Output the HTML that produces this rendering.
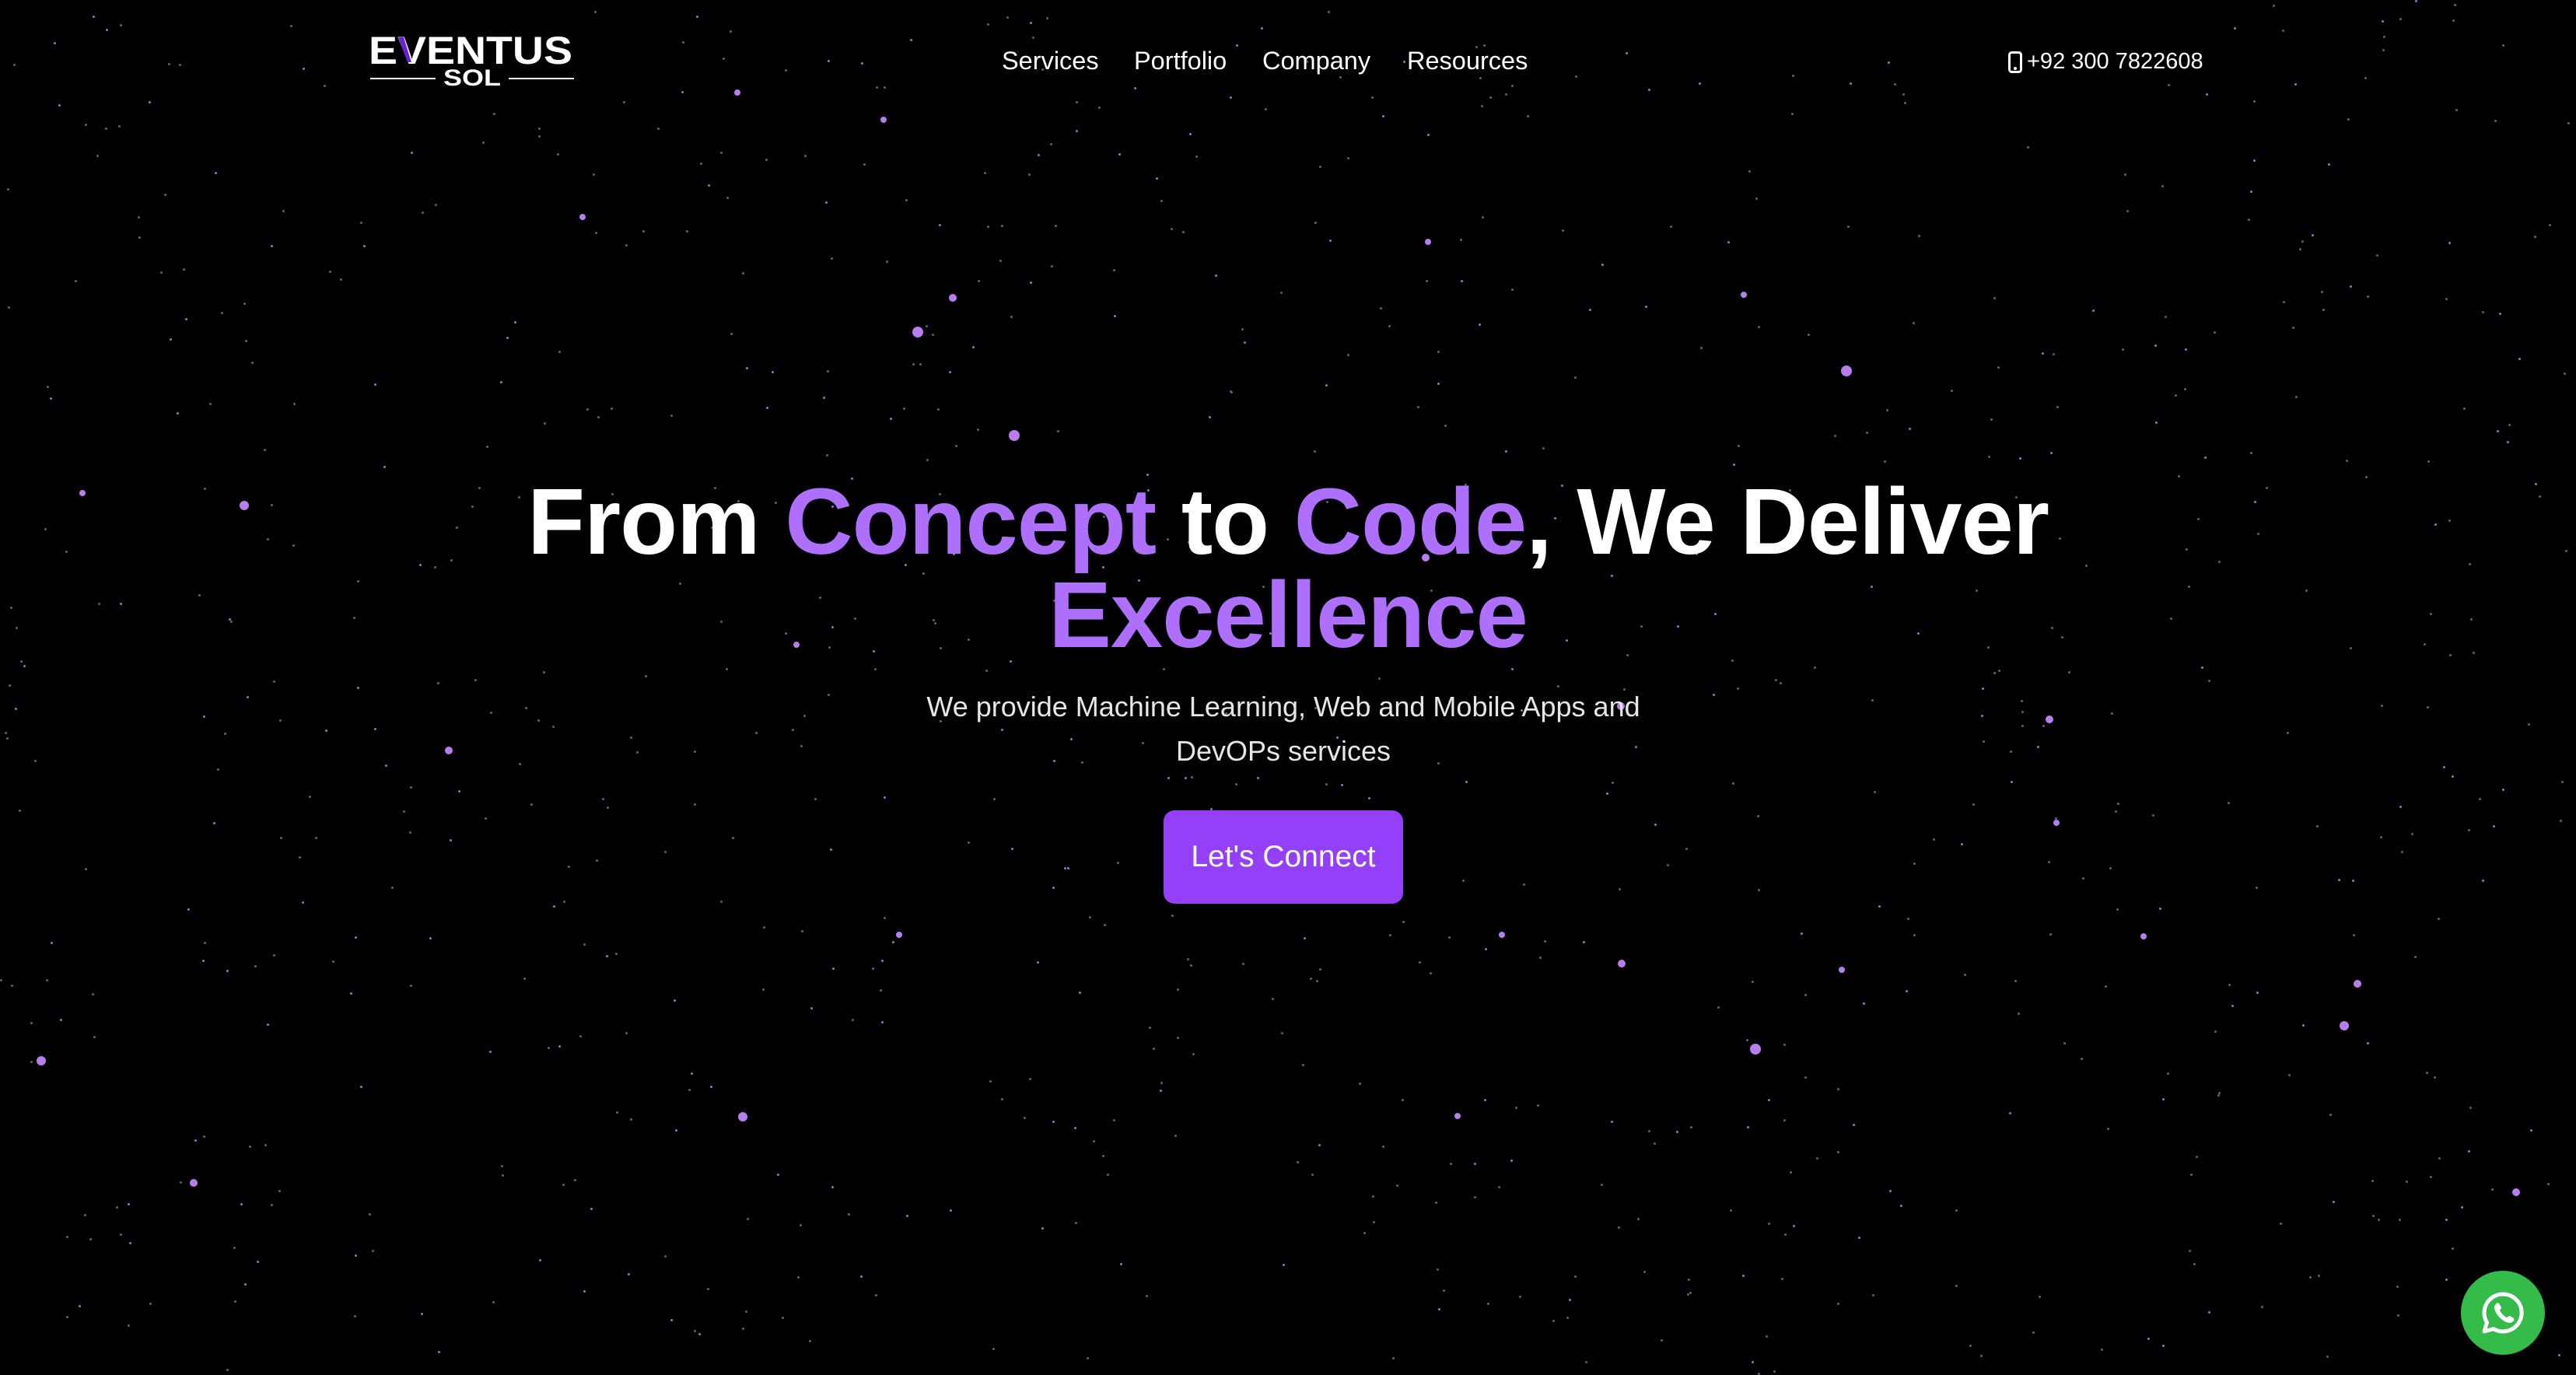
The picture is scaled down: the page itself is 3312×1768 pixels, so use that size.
<!DOCTYPE html>
<html><head><meta charset="utf-8">
<style>
html,body{margin:0;padding:0;background:#000;width:3312px;height:1766px;overflow:hidden;font-family:"Liberation Sans",Arial,sans-serif;color:#fff}
.s{position:absolute;border-radius:50%;background:#b77ef0}
.t{position:absolute;border-radius:50%;background:#6a5a80;width:3px;height:3px}
nav a{position:absolute;top:60px;font-size:32.5px;color:#fff;text-decoration:none}
h1{position:absolute;left:0;width:3312px;top:610px;margin:0;text-align:center;font-size:121px;line-height:120px;font-weight:bold;letter-spacing:-1px}
h1 span{color:#ad6ffc}
.sub{position:absolute;left:1150px;width:1000px;top:880px;text-align:center;font-size:36px;line-height:57px;color:#e6e6e6}
.btn{position:absolute;left:1496px;top:1042px;width:308px;height:120px;background:#9440f9;border-radius:14px;font-size:39px;line-height:120px;text-align:center;color:#fff}
.wa{position:absolute;left:3164px;top:1634px;width:108px;height:108px;border-radius:50%;background:#34bb4a}
</style></head><body>
<div id="stars"></div>
<svg style="position:absolute;left:474px;top:40px" width="266" height="72" viewBox="0 0 266 72">
<g fill="#fff" font-family="Liberation Sans,sans-serif" font-weight="bold">
<text x="0" y="42" font-size="50" textLength="262" lengthAdjust="spacingAndGlyphs">EVENTUS</text>
<text x="96" y="70" font-size="30" textLength="74" lengthAdjust="spacingAndGlyphs">SOL</text>
</g>
<polygon points="38,8 45,8 55,40 50,40" fill="#6b1fd6"/>
<rect x="2" y="60" width="84" height="2" fill="#fff"/><rect x="180" y="60" width="84" height="2" fill="#fff"/>
</svg>
<nav><a style="left:1288px">Services</a><a style="left:1458px">Portfolio</a><a style="left:1623px">Company</a><a style="left:1809px">Resources</a></nav>
<svg style="position:absolute;left:2582px;top:66px" width="18" height="28" viewBox="0 0 18 28"><rect x="1.5" y="1.5" width="15" height="25" rx="3" fill="none" stroke="#fff" stroke-width="3"/><circle cx="9" cy="22" r="2" fill="#fff"/></svg>
<div style="position:absolute;left:2606px;top:63px;font-size:29px">+92 300 7822608</div>
<h1>From <span>Concept</span> to <span>Code</span>, We Deliver<br><span>Excellence</span></h1>
<div class="sub">We provide Machine Learning, Web and Mobile Apps and DevOPs services</div>
<div class="btn">Let's Connect</div>
<div class="wa"><svg width="108" height="108" viewBox="0 0 108 108"><path d="M54 30a24 24 0 0 0-20.5 36.5L30 78l12-3.3A24 24 0 1 0 54 30z" fill="none" stroke="#fff" stroke-width="5" stroke-linejoin="round"/><path d="M45 43c1-2 3-2 4-1l3 5c0 2-2 3-2 4 2 4 5 7 9 9 1 0 2-2 4-2l5 3c1 1 0 4-2 5-3 2-8 1-14-4s-9-11-9-15c0-2 1-3 2-4z" fill="#fff"/></svg></div>
<script>
var big=[[1173,420,7],[1297,553,7],[2367,470,7],[308,644,6],[572,960,5],[2630,920,5],[47,1358,6],[949,1430,6],[2250,1342,7],[3008,1313,6],[244,1516,5],[3230,1528,5],[2079,903,5],[1828,712,5],[1220,378,5],[2080,1234,5],[1870,1431,4],[3026,1260,5],[2364,1243,4],[1152,1198,4],[1927,1198,4],[745,275,4],[1832,307,4],[2238,375,4],[102,630,4],[2640,1054,4],[1020,825,4],[2752,1200,4],[944,115,4],[1132,150,4]];
var h='';big.forEach(function(b){h+='<div class="s" style="left:'+b[0]+'px;top:'+b[1]+'px;width:'+b[2]*2+'px;height:'+b[2]*2+'px"></div>'});
var r=12345;function rnd(){r=(r*16807)%2147483647;return r/2147483647}
for(var i=0;i<900;i++){var x=rnd()*3312,y=rnd()*1766;h+='<div class="t" style="left:'+x+'px;top:'+y+'px;'+(rnd()<0.3?'background:#9a6fd0':'')+'"></div>'}
document.getElementById('stars').innerHTML=h;
</script>
</body></html>
